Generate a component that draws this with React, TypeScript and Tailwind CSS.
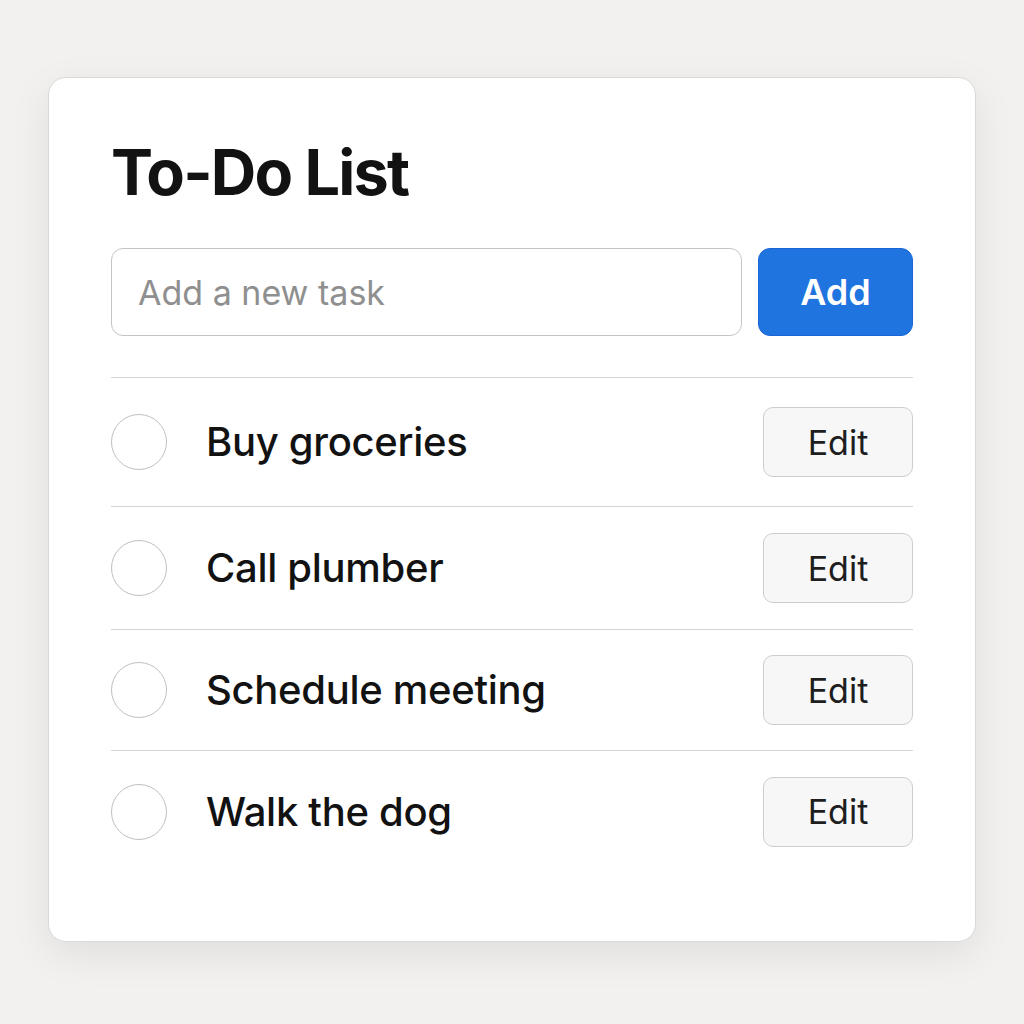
import { useState } from "react";

type Task = { id: number; title: string; rowClass: string };

const TASKS: Task[] = [
  { id: 1, title: "Buy groceries", rowClass: "h-[129px] border-b" },
  { id: 2, title: "Call plumber", rowClass: "h-[123px] border-b" },
  { id: 3, title: "Schedule meeting", rowClass: "h-[121px] border-b" },
  { id: 4, title: "Walk the dog", rowClass: "h-[121px]" },
];

export default function App() {
  const [text, setText] = useState("");

  return (
    <div
      className="min-h-[1024px] w-full bg-[#f2f1ef] pt-[77px]"
      style={{ fontFamily: "Inter, 'Noto Sans', sans-serif" }}
    >
      <div className="mx-auto w-[928px] h-[865px] rounded-[18px] border border-[#d9d9d9] bg-white px-[62px] pt-[62px] shadow-[0_12px_40px_rgba(0,0,0,0.08)]">
        <h1 className="text-[63px] leading-[64px] font-bold tracking-[-1.8px] text-[#121212]">To-Do List</h1>

        {/* New task row */}
        <div className="mt-[44px] flex gap-4">
          <input
            value={text}
            onChange={(e) => setText(e.target.value)}
            placeholder="Add a new task"
            className="h-[88px] flex-1 rounded-[12px] border border-[#c4c4c4] bg-white px-[26px] text-[34px] text-[#222] placeholder:text-[#8f8f8f] outline-none"
          />
          <button className="h-[88px] w-[155px] rounded-[12px] border border-[#1a66d6] bg-[#1f74e0] text-[36px] font-semibold text-white">
            Add
          </button>
        </div>

        {/* Tasks */}
        <div className="mt-[41px] border-t border-[#d4d4d4]">
          {TASKS.map((t) => (
            <div key={t.id} className={`flex items-center border-[#d4d4d4] ${t.rowClass}`}>
              <span className="h-[56px] w-[56px] shrink-0 rounded-full border-[1.5px] border-[#bfbfbf]" />
              <span className="ml-[39px] flex-1 text-[40px] font-medium tracking-[-0.3px] text-[#121212]">{t.title}</span>
              <button className="h-[70px] w-[150px] rounded-[10px] border border-[#cdcdcd] bg-[#f7f7f7] text-[34px] text-[#1e1e1e]">
                Edit
              </button>
            </div>
          ))}
        </div>
      </div>
    </div>
  );
}
